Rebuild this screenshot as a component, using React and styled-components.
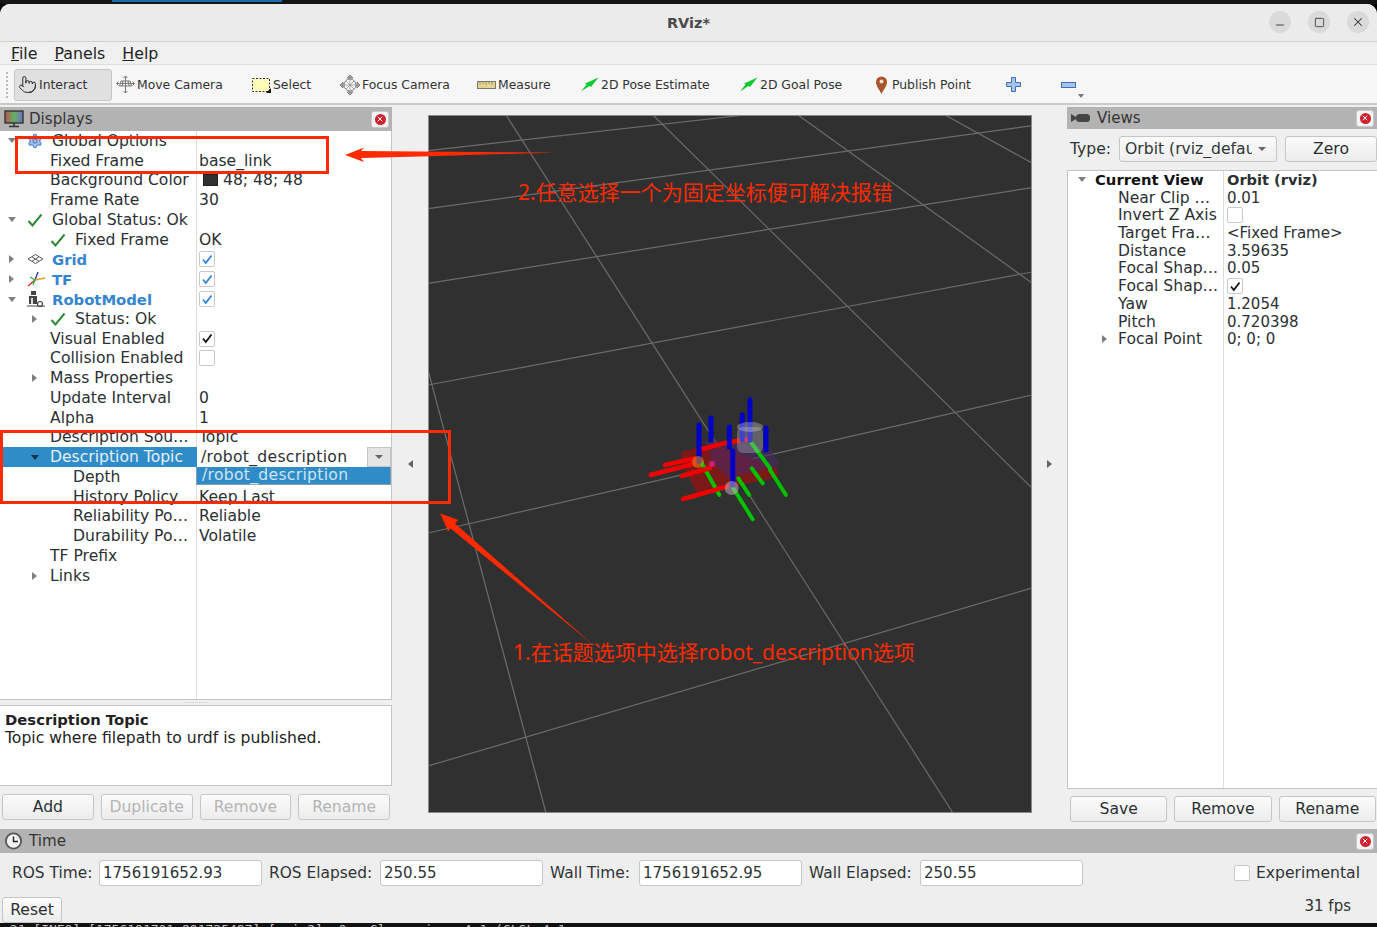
import React from "react";
import styled, { createGlobalStyle } from "styled-components";
import { Settings, Pointer, Minus, Square, X } from "lucide-react";

const GlobalStyle = createGlobalStyle`
  html, body { margin: 0; padding: 0; background: #000; }
  * { box-sizing: border-box; }
`;

const FONT = `"DejaVu Sans", "Noto Sans", sans-serif`;
const INK = "#2e3436";

const Page = styled.div`
  position: relative;
  width: 1377px;
  height: 927px;
  overflow: hidden;
  background: #000;
  font-family: ${FONT};
  font-size: 15.6px;
  color: ${INK};
  display: flex;
  flex-direction: column;
`;

const TopStrip = styled.div`
  height: 4px;
  background: #151515;
  padding-left: 112px;
`;
const TaskLine = styled.div`
  width: 170px;
  height: 2px;
  background: #1c6bb0;
`;

const Window = styled.div`
  flex: 1;
  display: flex;
  flex-direction: column;
  min-height: 0;
  background: #efefef;
  border-radius: 10px 10px 0 0;
  overflow: hidden;
`;

const TitleBar = styled.div`
  height: 38px;
  background: #ebebeb;
  border-bottom: 1px solid #cfcfcf;
  display: flex;
  align-items: center;
  justify-content: center;
  position: relative;
`;
const Title = styled.div`
  font-size: 14.5px;
  font-weight: bold;
  color: #4a4a4a;
  margin-top: 1px;
`;
const WinControls = styled.div`
  position: absolute;
  right: 8px;
  top: 7px;
  display: flex;
  gap: 17px;
`;
const WinButton = styled.div`
  width: 22px;
  height: 22px;
  border-radius: 50%;
  background: #dadada;
  color: #333;
  display: flex;
  align-items: center;
  justify-content: center;
`;

const MenuBar = styled.div`
  height: 23px;
  background: #f0f0f0;
  border-bottom: 1px solid #dedede;
  display: flex;
  align-items: center;
  padding: 1px 0 0 11px;
  gap: 17px;
  font-size: 15.8px;
`;
const MenuItem = styled.span`
  display: inline-block;
  color: #222;
  &::first-letter { text-decoration: underline; }
`;

const ToolBar = styled.div`
  height: 40px;
  background: #f6f6f6;
  border-bottom: 2px solid #c9c9c9;
  display: flex;
  align-items: center;
  padding: 1px 0 0 5px;
  font-size: 12.4px;
  position: relative;
`;
const Grip = styled.div`
  width: 5px;
  height: 28px;
  margin-right: 4px;
  background-image: radial-gradient(#bbb 1px, transparent 1px);
  background-size: 4px 4px;
`;
const ToolButton = styled.div`
  width: ${(p) => p.$w}px;
  flex: none;
  display: flex;
  align-items: center;
  gap: 2px;
  height: 32px;
  padding-left: ${(p) => (p.$active ? 3 : 0)}px;
  margin-right: ${(p) => (p.$active ? 3 : 0)}px;
  color: #333;
  white-space: nowrap;
  background: ${(p) => (p.$active ? "#e0e0e0" : "transparent")};
  border: 1px solid ${(p) => (p.$active ? "#c6c6c6" : "transparent")};
  border-radius: 3px;
`;
const MoreArrow = styled.div`
  position: absolute;
  left: 1078px;
  top: 29px;
  width: 0;
  height: 0;
  border-left: 3px solid transparent;
  border-right: 3px solid transparent;
  border-top: 4px solid #777;
`;

const Main = styled.div`
  height: 724px;
  display: flex;
  padding-top: 2px;
`;
const Dock = styled.div`
  width: ${(p) => p.$w}px;
  flex: none;
  display: flex;
  flex-direction: column;
`;
const DockHeader = styled.div`
  height: ${(p) => p.$h || 24}px;
  flex: none;
  background: #b3b3b3;
  display: flex;
  align-items: center;
  gap: 5px;
  padding: 0 3px 0 4px;
  font-size: 15.1px;
  color: #333;
`;
const DockTitle = styled.span`
  flex: 1;
  margin-left: ${(p) => p.$gap || 0}px;
`;
const CloseBox = styled.div`
  width: 18px;
  height: 17px;
  background: #f4f4f4;
  border: 1px solid #c8c8c8;
  border-radius: 3px;
  display: flex;
  align-items: center;
  justify-content: center;
`;
const CloseDot = styled.div`
  width: 11px;
  height: 11px;
  border-radius: 50%;
  background: #cf2030;
  display: flex;
  align-items: center;
  justify-content: center;
  color: #fff;
`;

const Tree = styled.div`
  flex: 1;
  min-height: 0;
  background-color: #fff;
  background-image: linear-gradient(#dcdcdc, #dcdcdc);
  background-repeat: no-repeat;
  background-size: 1px 100%;
  background-position: ${(p) => p.$col}px 0;
  border: 1px solid #c4c4c4;
  border-width: ${(p) => p.$borders};
`;
const Row = styled.div`
  height: ${(p) => p.$h}px;
  display: grid;
  grid-template-columns: ${(p) => p.$col}px 1fr;
  align-items: center;
  white-space: nowrap;
`;
const LabelCell = styled.div`
  height: 100%;
  display: flex;
  align-items: center;
  padding-left: ${(p) => p.$depth * 23 + (p.$shift || 0)}px;
  background: ${(p) => (p.$selected ? "#308cc6" : "transparent")};
  color: ${(p) => (p.$selected ? "#e4eff8" : p.$blue ? "#3584cf" : p.$head ? "#111" : "#2b3033")};
  font-weight: ${(p) => (p.$blue || p.$head ? "bold" : "normal")};
  font-size: ${(p) => (p.$blue || p.$head ? "14.8px" : "inherit")};
`;
const ArrowSlot = styled.div`
  width: 23px;
  flex: none;
  display: flex;
  justify-content: center;
`;
const ArrowDown = styled.div`
  width: 0;
  height: 0;
  border-left: 4.5px solid transparent;
  border-right: 4.5px solid transparent;
  border-top: 5px solid ${(p) => (p.$dark ? "#14304a" : "#808080")};
`;
const ArrowRight = styled.div`
  width: 0;
  height: 0;
  border-top: 4.5px solid transparent;
  border-bottom: 4.5px solid transparent;
  border-left: 5px solid #808080;
`;
const IconSlot = styled.div`
  width: 27px;
  flex: none;
  display: flex;
  padding-left: 4px;
`;
const RowText = styled.span`
  margin-left: ${(p) => (p.$icon ? 2 : 4)}px;
`;
const ValueCell = styled.div`
  position: relative;
  height: 100%;
  display: flex;
  align-items: center;
  padding-left: ${(p) => p.$pad}px;
  gap: 5px;
  color: #2b3033;
  font-weight: ${(p) => (p.$bold ? "bold" : "normal")};
  font-size: ${(p) => p.$size || "inherit"};
`;
const CheckBox = styled.div`
  width: 16px;
  height: 16px;
  background: #fff;
  border: 1px solid #c9c9c9;
  border-radius: 2px;
  display: flex;
  align-items: center;
  justify-content: center;
`;
const Swatch = styled.div`
  width: 15px;
  height: 12px;
  margin-left: 4px;
  background: #303030;
  border: 1px solid #222;
`;
const Combo = styled.div`
  position: absolute;
  left: 0;
  right: 0;
  top: 0;
  bottom: 0;
  background: #fff;
  padding-left: 4px;
  letter-spacing: 0.3px;
  display: flex;
  align-items: center;
  justify-content: space-between;
`;
const ComboButton = styled.div`
  width: 24px;
  height: 100%;
  background: #e4e4e4;
  border: 1px solid #c6c6c6;
  display: flex;
  align-items: center;
  justify-content: center;
`;
const Popup = styled.div`
  position: absolute;
  left: -1px;
  right: 0;
  top: 100%;
  height: 18px;
  background: #308cc6;
  color: #cfe4f4;
  padding-left: 5px;
  letter-spacing: 0.3px;
  border: 1px solid #7f9fb8;
  border-top: none;
  line-height: 17px;
  z-index: 2;
`;

const SplitDots = styled.div`
  height: 5px;
  flex: none;
  background-image: radial-gradient(#bbb 0.7px, transparent 0.8px);
  background-size: 3px 3px;
  background-repeat: repeat-x;
  background-position: center;
  margin: 0 184px;
`;
const HelpBox = styled.div`
  height: 81px;
  flex: none;
  background: #fff;
  border: 1px solid #c4c4c4;
  border-left: none;
  padding: 5px 5px;
  line-height: 18px;
  color: #222;
`;
const Strong = styled.div`
  font-weight: bold;
  font-size: 14.8px;
`;
const ButtonRow = styled.div`
  display: grid;
  grid-template-columns: repeat(${(p) => p.$n}, 1fr);
  gap: 7px;
  padding: ${(p) => p.$pad};
`;
const Button = styled.div`
  height: 26px;
  width: ${(p) => (p.$w ? `${p.$w}px` : "auto")};
  background: linear-gradient(#fbfbfb, #ececec);
  border: 1px solid #c6c6c6;
  border-radius: 3px;
  display: flex;
  align-items: center;
  justify-content: center;
  color: ${(p) => (p.$off ? "#b4b4b4" : "#2b3033")};
`;

const Center = styled.div`
  flex: 1;
  display: flex;
`;
const SideHandle = styled.div`
  width: ${(p) => p.$w}px;
  flex: none;
  display: flex;
  align-items: flex-start;
  justify-content: center;
  padding-top: 353px;
`;
const TriLeft = styled.div`
  width: 0;
  height: 0;
  border-top: 4px solid transparent;
  border-bottom: 4px solid transparent;
  border-right: 5px solid #666;
`;
const TriRight = styled(TriLeft)`
  border-right: none;
  border-left: 5px solid #666;
`;
const ViewportWrap = styled.div`
  width: 604px;
  height: 698px;
  flex: none;
  margin-top: 8px;
  background: #303030;
  outline: 1px solid #8a8a8a;
  outline-offset: -1px;
`;
const Scene = styled.svg`
  display: block;
  width: 604px;
  height: 698px;
`;

const TypeRow = styled.div`
  height: 41px;
  flex: none;
  display: flex;
  align-items: center;
  padding: 0 0 2px 3px;
  gap: 8px;
`;
const TypeCombo = styled.div`
  width: 158px;
  height: 26px;
  background: linear-gradient(#fbfbfb, #eeeeee);
  border: 1px solid #c6c6c6;
  border-radius: 3px;
  display: flex;
  align-items: center;
  padding: 0 10px 0 5px;
  gap: 6px;
`;
const ClipText = styled.div`
  flex: 1;
  overflow: hidden;
  white-space: nowrap;
`;
const MiniDown = styled.div`
  width: 0;
  height: 0;
  border-left: 4px solid transparent;
  border-right: 4px solid transparent;
  border-top: 4px solid #666;
`;

const TimePanel = styled.div`
  flex: 1;
  display: flex;
  flex-direction: column;
  background: #eeeeee;
  min-height: 0;
`;
const TimeRow = styled.div`
  display: flex;
  align-items: center;
  height: 32px;
  padding: 6px 17px 0 12px;
  margin-top: 1px;
`;
const TimeLabel = styled.span`
  width: ${(p) => p.$w}px;
  flex: none;
  white-space: nowrap;
  font-size: 15.4px;
`;
const TimeInput = styled.div`
  width: 163px;
  height: 26px;
  margin-right: 7px;
  background: #fff;
  border: 1px solid #c6c6c6;
  border-radius: 3px;
  padding-left: 3px;
  line-height: 24px;
  font-size: 15px;
`;
const Experimental = styled.div`
  margin-left: auto;
  display: flex;
  align-items: center;
  gap: 6px;
`;
const FootRow = styled.div`
  display: flex;
  justify-content: space-between;
  align-items: flex-start;
  padding: 11px 26px 0 2px;
`;
const Fps = styled.span`
  font-size: 15px;
  line-height: 18px;
`;
const BottomStrip = styled.div`
  height: 4px;
  flex: none;
  background: #111;
  overflow: hidden;
  white-space: nowrap;
  font-family: "DejaVu Sans Mono", monospace;
  font-size: 13px;
  line-height: 14px;
  color: #c4c4c4;
  padding-left: 2px;
`;

const Callout = styled.div`
  position: absolute;
  left: ${(p) => p.$x}px;
  top: ${(p) => p.$y}px;
  width: ${(p) => p.$w}px;
  height: ${(p) => p.$h}px;
  border: 3px solid #ff2a00;
  pointer-events: none;
`;
const Note = styled.div`
  position: absolute;
  left: ${(p) => p.$x}px;
  top: ${(p) => p.$y}px;
  color: #ff2a00;
  font-family: "Noto Sans", "Noto Sans CJK SC", sans-serif;
  font-size: 21px;
  line-height: 28px;
  white-space: nowrap;
`;
const ArrowLayer = styled.svg`
  position: absolute;
  left: 0;
  top: 0;
  width: 1377px;
  height: 927px;
  pointer-events: none;
`;

function Tick({ color = "#2f8a3b" }) {
  return (
    <svg width="16" height="14" viewBox="0 0 16 14">
      <path d="M1.5 8 L5.5 12.5 L14.5 1.5" fill="none" stroke={color} strokeWidth="2" />
    </svg>
  );
}

function BoxTick({ color }) {
  return (
    <svg width="12" height="11" viewBox="0 0 12 11">
      <path d="M2 5.5 L4.8 9 L10.5 1.5" fill="none" stroke={color} strokeWidth="1.8" />
    </svg>
  );
}

function GridIcon() {
  return (
    <svg width="17" height="12" viewBox="0 0 17 12" fill="none" stroke="#555" strokeWidth="1">
      <path d="M1 6 L8.5 1.5 L16 6 L8.5 10.5 Z M5 3.8 L12 8.2 M12 3.8 L5 8.2" />
    </svg>
  );
}

function TfIcon() {
  return (
    <svg width="19" height="18" viewBox="0 0 19 18" fill="none" strokeWidth="1.3">
      <path d="M8 10 L1 16" stroke="#e02020" />
      <path d="M8 10 L11 2" stroke="#2030c0" />
      <path d="M8 10 L18 8" stroke="#e0a020" />
      <path d="M8 10 L6 15" stroke="#20b040" />
      <path d="M8 10 L3 7" stroke="#20b040" />
    </svg>
  );
}

function RobotIcon() {
  return (
    <svg width="18" height="16" viewBox="0 0 18 16">
      <rect x="4" y="0" width="5" height="4" fill="#444" />
      <rect x="2" y="5" width="8" height="8" fill="#444" />
      <rect x="4" y="7" width="2" height="6" fill="#ddd" />
      <circle cx="13" cy="13" r="2.5" fill="none" stroke="#444" strokeWidth="1.2" />
      <path d="M0 15 H18" stroke="#444" />
    </svg>
  );
}

function Monitor() {
  return (
    <svg width="20" height="18" viewBox="0 0 20 18">
      <defs>
        <linearGradient id="screen" x1="0" x2="1" y1="0" y2="0">
          <stop offset="0" stopColor="#c05050" />
          <stop offset="0.5" stopColor="#60b060" />
          <stop offset="1" stopColor="#7070c8" />
        </linearGradient>
      </defs>
      <rect x="1" y="1" width="18" height="12" fill="url(#screen)" stroke="#333" strokeWidth="1.4" />
      <path d="M10 13 V16 M5 16.5 H15" stroke="#333" strokeWidth="1.6" />
    </svg>
  );
}

function CameraIcon() {
  return (
    <svg width="20" height="12" viewBox="0 0 20 12" fill="#444">
      <path d="M0 2 L5 5 V7 L0 10 Z" />
      <rect x="5" y="2" width="14" height="8" rx="3.5" />
    </svg>
  );
}

function ClockIcon() {
  return (
    <svg width="20" height="18" viewBox="0 0 20 18">
      <circle cx="9.5" cy="9" r="7.6" fill="#f2f2f2" stroke="#555" strokeWidth="1.8" />
      <path d="M9.5 4.5 V9.5 H14" fill="none" stroke="#222" strokeWidth="1.4" />
    </svg>
  );
}

function MoveIcon() {
  return (
    <svg width="19" height="19" viewBox="0 0 19 19" fill="none" stroke="#777" strokeWidth="1">
      <path d="M5 6 H14 L15.5 11 H3.5 Z M7 6 L6 11 M9.5 6 V11 M12 6 L13 11 M4.3 8.5 H14.7" />
      <path d="M9.5 6 V1 M7.5 3 L9.5 1 L11.5 3 M9.5 11 V18 M7.5 16 L9.5 18 L11.5 16 M3.5 8.5 H0.5 M2.5 6.5 L0.5 8.5 L2.5 10.5 M15 8.5 H18.5 M16.5 6.5 L18.5 8.5 L16.5 10.5" />
    </svg>
  );
}

function SelectIcon() {
  return (
    <svg width="19" height="16" viewBox="0 0 19 16">
      <rect x="0.5" y="1.5" width="17" height="13" fill="#fdfdb8" stroke="#333" strokeDasharray="2 1.5" />
      <path d="M19 11 V16 H14 Z" fill="#111" />
    </svg>
  );
}

function FocusIcon() {
  return (
    <svg width="20" height="20" viewBox="0 0 20 20" fill="none" stroke="#808080">
      <path d="M10 0 L13 3 H7 Z M10 20 L13 17 H7 Z M0 10 L3 7 V13 Z M20 10 L17 7 V13 Z" fill="#aaa" />
      <circle cx="10" cy="10" r="6" />
      <path d="M10 3 V17 M3 10 H17 M6 6 L14 14 M14 6 L6 14" strokeWidth="0.6" />
    </svg>
  );
}

function RulerIcon() {
  return (
    <svg width="19" height="8" viewBox="0 0 19 8">
      <rect x="0.5" y="0.5" width="18" height="7" fill="#e6d48c" stroke="#777" />
      <path d="M3 1 V4 M6 1 V3 M9 1 V4 M12 1 V3 M15 1 V4" stroke="#777" strokeWidth="0.7" />
    </svg>
  );
}

function PoseIcon() {
  return (
    <svg width="19" height="15" viewBox="0 0 19 15">
      <path d="M1 14.5 L6.5 7.5 L5 6.5 L18.5 0.5 L11 10 L9.5 9 Z" fill="#14c832" />
    </svg>
  );
}

function PinIcon() {
  return (
    <svg width="15" height="18" viewBox="0 0 15 18">
      <path d="M6.5 18 C4 13 1 10 1 6 A5.5 5.5 0 0 1 12 6 C12 10 9 13 6.5 18 Z" fill="#a8552c" />
      <circle cx="6.5" cy="5.5" r="2" fill="#f0e0c8" />
    </svg>
  );
}

function PlusIcon() {
  return (
    <svg width="15" height="15" viewBox="0 0 15 15">
      <path d="M5.5 0.5 H9.5 V5.5 H14.5 V9.5 H9.5 V14.5 H5.5 V9.5 H0.5 V5.5 H5.5 Z" fill="#a9c4ec" stroke="#3f6fb8" />
    </svg>
  );
}

function MinusIcon() {
  return (
    <svg width="15" height="6" viewBox="0 0 15 6">
      <rect x="0.5" y="0.5" width="14" height="5" fill="#a9c4ec" stroke="#3f6fb8" />
    </svg>
  );
}

function Close() {
  return (
    <CloseBox>
      <CloseDot>
        <X size={8} strokeWidth={3} />
      </CloseDot>
    </CloseBox>
  );
}

const tools = [
  { name: "Move Camera", w: 136, icon: <MoveIcon /> },
  { name: "Select", w: 88, icon: <SelectIcon /> },
  { name: "Focus Camera", w: 137, icon: <FocusIcon /> },
  { name: "Measure", w: 103, icon: <RulerIcon /> },
  { name: "2D Pose Estimate", w: 159, icon: <PoseIcon /> },
  { name: "2D Goal Pose", w: 136, icon: <PoseIcon /> },
  { name: "Publish Point", w: 131, icon: <PinIcon /> },
  { name: "", w: 55, icon: <PlusIcon /> },
  { name: "", w: 20, icon: <MinusIcon /> },
];

const displayRows = [
  { label: "Global Options", depth: 0, arrow: "down", icon: <Settings size={16} color="#5d8ad6" fill="#a9c4ec" /> },
  { label: "Fixed Frame", depth: 1, value: "base_link" },
  { label: "Background Color", depth: 1, value: "48; 48; 48", swatch: true },
  { label: "Frame Rate", depth: 1, value: "30" },
  { label: "Global Status: Ok", depth: 0, arrow: "down", icon: <Tick /> },
  { label: "Fixed Frame", depth: 1, icon: <Tick />, value: "OK" },
  { label: "Grid", depth: 0, arrow: "right", icon: <GridIcon />, blue: true, check: "#3584cf" },
  { label: "TF", depth: 0, arrow: "right", icon: <TfIcon />, blue: true, check: "#3584cf" },
  { label: "RobotModel", depth: 0, arrow: "down", icon: <RobotIcon />, blue: true, check: "#3584cf" },
  { label: "Status: Ok", depth: 1, arrow: "right", icon: <Tick /> },
  { label: "Visual Enabled", depth: 1, check: "#111" },
  { label: "Collision Enabled", depth: 1, check: "none" },
  { label: "Mass Properties", depth: 1, arrow: "right" },
  { label: "Update Interval", depth: 1, value: "0" },
  { label: "Alpha", depth: 1, value: "1" },
  { label: "Description Sou…", depth: 1, value: "Topic" },
  { label: "Description Topic", depth: 1, arrow: "down", selected: true, combo: "/robot_description" },
  { label: "Depth", depth: 2 },
  { label: "History Policy", depth: 2, value: "Keep Last" },
  { label: "Reliability Po…", depth: 2, value: "Reliable" },
  { label: "Durability Po…", depth: 2, value: "Volatile" },
  { label: "TF Prefix", depth: 1 },
  { label: "Links", depth: 1, arrow: "right" },
];

const viewRows = [
  { label: "Near Clip …", value: "0.01" },
  { label: "Invert Z Axis", check: "none" },
  { label: "Target Fra…", value: "<Fixed Frame>" },
  { label: "Distance", value: "3.59635" },
  { label: "Focal Shap…", value: "0.05" },
  { label: "Focal Shap…", check: "#111" },
  { label: "Yaw", value: "1.2054" },
  { label: "Pitch", value: "0.720398" },
  { label: "Focal Point", value: "0; 0; 0", arrow: true },
];

const timeFields = [
  { label: "ROS Time:", w: 87, value: "1756191652.93" },
  { label: "ROS Elapsed:", w: 111, value: "250.55" },
  { label: "Wall Time:", w: 89, value: "1756191652.95" },
  { label: "Wall Elapsed:", w: 111, value: "250.55" },
];

const gridLines = [
  [428, 150.7, 745, 115],
  [428, 208.7, 1032, 125.7],
  [428, 283.3, 1032, 187.7],
  [428, 385, 1032, 272],
  [428, 533, 1032, 395],
  [428, 766, 1032, 588],
  [506, 115, 953, 813],
  [653, 115, 1032, 488],
  [798, 115, 1032, 283],
  [945, 115, 1032, 163],
  [428, 370, 546, 813],
];

const blueBars = [
  [699, 425, 699, 462],
  [711, 418, 711, 440],
  [729.3, 427, 729.3, 447],
  [742.3, 415, 742.3, 440],
  [750, 400, 750, 440],
  [766, 428, 766, 450],
  [732.7, 451, 732.7, 485],
];
const redBars = [
  [665, 465, 695, 458.3],
  [650.7, 475, 698, 462.7],
  [681.7, 476, 710, 468],
  [683, 499, 726.7, 486.7],
  [702.7, 449, 730, 441.7],
  [732.7, 441.7, 746.7, 439.3],
];
const greenBars = [
  [701.7, 463.3, 719.3, 495],
  [733.3, 488.3, 752.7, 519.3],
  [738.3, 478.3, 749.3, 495],
  [751.7, 468.3, 762.7, 483.3],
  [751.7, 443.3, 770, 468.3],
  [770, 470, 786, 495],
];

function Bars({ items, color, width }) {
  return items.map((b, i) => (
    <line key={i} x1={b[0]} y1={b[1]} x2={b[2]} y2={b[3]} stroke={color} strokeWidth={width} strokeLinecap="round" />
  ));
}

function Viewport() {
  return (
    <ViewportWrap>
      <Scene viewBox="428 115 604 698">
        {gridLines.map((l, i) => (
          <line key={i} x1={l[0]} y1={l[1]} x2={l[2]} y2={l[3]} stroke="#6c6c6c" strokeWidth="1.2" />
        ))}
        <path d="M681 452 L713 443 L777 468 L778 477 L726 488 L697 494 L682 463 Z" fill="#7c1818" />
        <path d="M705 440 L770 447 L780 466 L728 478 L712 462 Z" fill="#4a2a62" opacity="0.6" />
        <Bars items={greenBars} color="#00c000" width={4} />
        <Bars items={redBars} color="#f00000" width={4.5} />
        <Bars items={blueBars} color="#0000c8" width={5} />
        <rect x="737" y="427" width="26" height="26" rx="6" fill="#c8c8d8" opacity="0.32" />
        <ellipse cx="750" cy="427" rx="13" ry="5" fill="#d8d8d8" opacity="0.35" />
        <circle cx="731.7" cy="488" r="7" fill="#d0b8c8" opacity="0.5" />
        <circle cx="698" cy="462" r="6" fill="#e09010" opacity="0.55" />
        <circle cx="712" cy="464" r="3" fill="#f020a0" opacity="0.7" />
      </Scene>
    </ViewportWrap>
  );
}

function TreeValue({ row }) {
  if (row.combo) {
    return (
      <ValueCell $pad={0}>
        <Combo>
          {row.combo}
          <ComboButton>
            <MiniDown />
          </ComboButton>
        </Combo>
        <Popup>{row.combo}</Popup>
      </ValueCell>
    );
  }
  return (
    <ValueCell $pad={2}>
      {row.check && (
        <CheckBox>{row.check !== "none" && <BoxTick color={row.check} />}</CheckBox>
      )}
      {row.swatch && <Swatch />}
      {row.value}
    </ValueCell>
  );
}

function DisplayRow({ row }) {
  return (
    <Row $h={19.78} $col={197}>
      <LabelCell $depth={row.depth} $selected={row.selected} $blue={row.blue}>
        <ArrowSlot>
          {row.arrow === "down" && <ArrowDown $dark={row.selected} />}
          {row.arrow === "right" && <ArrowRight />}
        </ArrowSlot>
        {row.icon && <IconSlot>{row.icon}</IconSlot>}
        <RowText $icon={!!row.icon}>{row.label}</RowText>
      </LabelCell>
      <TreeValue row={row} />
    </Row>
  );
}

export default function App() {
  return (
    <Page>
      <GlobalStyle />
      <TopStrip>
        <TaskLine />
      </TopStrip>
      <Window>
        <TitleBar>
          <Title>RViz*</Title>
          <WinControls>
            <WinButton><Minus size={12} strokeWidth={1.8} style={{ marginTop: 5 }} /></WinButton>
            <WinButton><Square size={11} strokeWidth={1.8} /></WinButton>
            <WinButton><X size={14} strokeWidth={1.8} /></WinButton>
          </WinControls>
        </TitleBar>
        <MenuBar>
          <MenuItem>File</MenuItem>
          <MenuItem>Panels</MenuItem>
          <MenuItem>Help</MenuItem>
        </MenuBar>
        <ToolBar>
          <Grip />
          <ToolButton $active $w={98}>
            <Pointer size={19} strokeWidth={1.2} color="#222" />
            Interact
          </ToolButton>
          {tools.map((t, i) => (
            <ToolButton key={i} $w={t.w}>
              {t.icon}
              {t.name}
            </ToolButton>
          ))}
          <MoreArrow />
        </ToolBar>
        <Main>
          <Dock $w={392}>
            <DockHeader>
              <Monitor />
              <DockTitle>Displays</DockTitle>
              <Close />
            </DockHeader>
            <Tree $col={196} $borders="0 1px 1px 0">
              {displayRows.map((row, i) => (
                <DisplayRow key={i} row={row} />
              ))}
            </Tree>
            <SplitDots />
            <HelpBox>
              <Strong>Description Topic</Strong>
              Topic where filepath to urdf is published.
            </HelpBox>
            <ButtonRow $n={4} $pad="8px 2px 9px 2px">
              <Button>Add</Button>
              <Button $off>Duplicate</Button>
              <Button $off>Remove</Button>
              <Button $off>Rename</Button>
            </ButtonRow>
          </Dock>
          <Center>
            <SideHandle $w={36}>
              <TriLeft />
            </SideHandle>
            <Viewport />
            <SideHandle $w={35}>
              <TriRight />
            </SideHandle>
          </Center>
          <Dock $w={310}>
            <DockHeader $h={22}>
              <CameraIcon />
              <DockTitle $gap={1}>Views</DockTitle>
              <Close />
            </DockHeader>
            <TypeRow>
              Type:
              <TypeCombo>
                <ClipText>Orbit (rviz_default)</ClipText>
                <MiniDown />
              </TypeCombo>
              <Button $w={92}>Zero</Button>
            </TypeRow>
            <Tree $col={155} $borders="1px 0 1px 1px">
              <Row $h={17.7} $col={156}>
                <LabelCell $depth={0} $shift={2} $head>
                  <ArrowSlot><ArrowDown /></ArrowSlot>
                  <RowText $icon>Current View</RowText>
                </LabelCell>
                <ValueCell $pad={3} $bold $size="14.6px">Orbit (rviz)</ValueCell>
              </Row>
              {viewRows.map((row, i) => (
                <Row key={i} $h={17.7} $col={156}>
                  <LabelCell $depth={1} $shift={2}>
                    <ArrowSlot>{row.arrow && <ArrowRight />}</ArrowSlot>
                    <RowText $icon>{row.label}</RowText>
                  </LabelCell>
                  <ValueCell $pad={3} $size="15px">
                    {row.check && (
                      <CheckBox>{row.check !== "none" && <BoxTick color={row.check} />}</CheckBox>
                    )}
                    {row.value}
                  </ValueCell>
                </Row>
              ))}
            </Tree>
            <ButtonRow $n={3} $pad="7px 1px 7px 3px">
              <Button>Save</Button>
              <Button>Remove</Button>
              <Button>Rename</Button>
            </ButtonRow>
          </Dock>
        </Main>
        <TimePanel>
          <DockHeader>
            <ClockIcon />
            <DockTitle>Time</DockTitle>
            <Close />
          </DockHeader>
          <TimeRow>
            {timeFields.map((f) => (
              <React.Fragment key={f.label}>
                <TimeLabel $w={f.w}>{f.label}</TimeLabel>
                <TimeInput>{f.value}</TimeInput>
              </React.Fragment>
            ))}
            <Experimental>
              <CheckBox />
              Experimental
            </Experimental>
          </TimeRow>
          <FootRow>
            <Button $w={60}>Reset</Button>
            <Fps>31 fps</Fps>
          </FootRow>
        </TimePanel>
      </Window>
      <BottomStrip>-21 [INFO] [1756191701.991735487] [rviz2]: OpenGl version: 4.1 (GLSL 4.1</BottomStrip>

      <Callout $x={15} $y={136} $w={314} $h={38} />
      <Callout $x={0} $y={430} $w={451} $h={74} />
      <ArrowLayer viewBox="0 0 1377 927">
        <path d="M345 155 L364 147.5 L361 151 L420 151.5 L556 152.5 L420 156.5 L361 158 L364 162 Z" fill="#ff2a00" />
        <path d="M440 513.3 L458.3 520 L455 523.5 L593.3 645 L450 528 L448.3 531.7 Z" fill="#ff2a00" />
      </ArrowLayer>
      <Note $x={518} $y={178}>2.任意选择一个为固定坐标便可解决报错</Note>
      <Note $x={513} $y={638}>1.在话题选项中选择robot_description选项</Note>
    </Page>
  );
}
